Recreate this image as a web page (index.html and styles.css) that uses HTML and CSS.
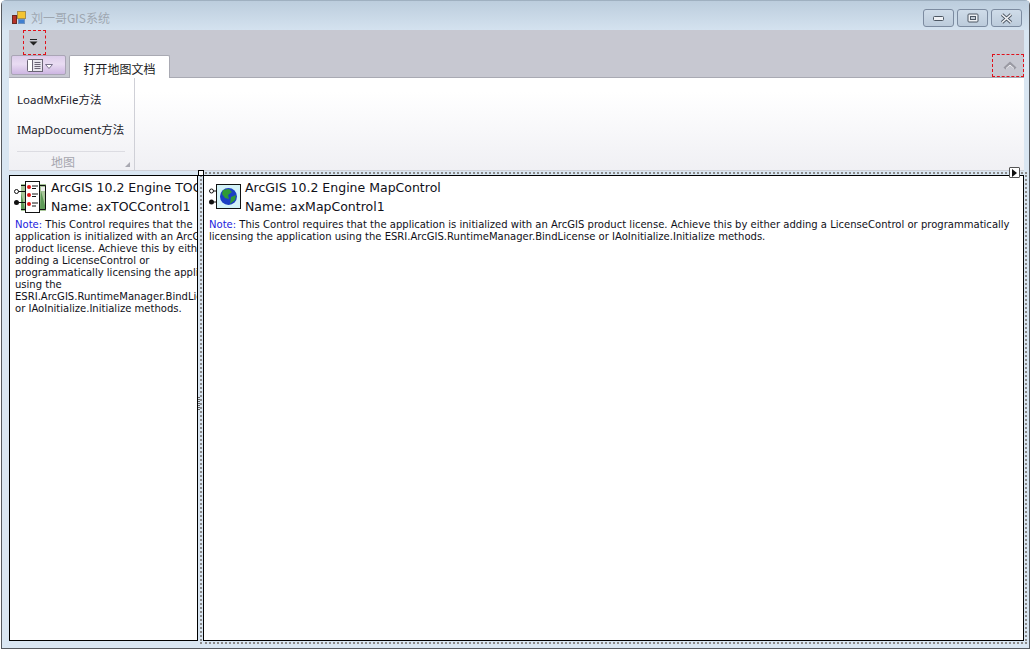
FILE: index.html
```html
<!DOCTYPE html>
<html lang="zh-CN">
<head>
    <meta charset="UTF-8">
    <title>刘一哥GIS系统</title>
    <link rel="stylesheet" href="styles.css">
</head>
<body>
    <div class="window">
        <div class="titlebar">
            <svg class="app-icon" width="14" height="14" viewBox="0 0 14 14">
                <rect x="5.5" y="0.5" width="8" height="7" fill="#f4c430" stroke="#a8904a"/>
                <rect x="0.5" y="4.5" width="4" height="8" fill="#b8332a" stroke="#6b2a22"/>
                <rect x="6.5" y="8.5" width="6" height="4" fill="#3f7fd0" stroke="#6f93c0"/>
            </svg>
            <span class="title">刘一哥GIS系统</span>
            <div class="win-buttons">
                <div class="win-btn">
                    <svg width="12" height="7" viewBox="0 0 12 7"><rect x="0.5" y="1.5" width="10" height="4" rx="1" fill="#eef1f5" stroke="#4d5763"/></svg>
                </div>
                <div class="win-btn">
                    <svg width="12" height="10" viewBox="0 0 12 10"><rect x="1" y="1" width="10" height="8" rx="1" fill="#eef1f5" stroke="#4d5763"/><rect x="3.5" y="3.5" width="5" height="3" fill="#c3ccd6" stroke="#4d5763"/></svg>
                </div>
                <div class="win-btn">
                    <svg width="13" height="11" viewBox="0 0 13 11"><path d="M2 1.5 L11 9.5 M11 1.5 L2 9.5" stroke="#4d5763" stroke-width="3.4"/><path d="M2 1.5 L11 9.5 M11 1.5 L2 9.5" stroke="#f2f4f7" stroke-width="1.6"/></svg>
                </div>
            </div>
        </div>

        <div class="ribbon-head">
            <div class="quick-bar">
                <div class="dashed-box quick-drop">
                    <svg width="9" height="7" viewBox="0 0 9 7"><rect x="1" y="0" width="7" height="1" fill="#222"/><path d="M0.5 2.5 H8.5 L4.5 6.5 Z" fill="#222"/></svg>
                </div>
            </div>
            <div class="tab-row">
                <div class="app-btn">
                    <svg width="26" height="13" viewBox="0 0 26 13">
                        <rect x="0.5" y="0.5" width="15" height="12" rx="1" fill="#fff" stroke="#6a6575"/>
                        <rect x="5.5" y="0.5" width="10" height="12" fill="#e8e6ee" stroke="#6a6575"/>
                        <path d="M7.5 3.5 H13.5 M7.5 5.5 H13.5 M7.5 7.5 H13.5 M7.5 9.5 H13.5" stroke="#6a6575"/>
                        <path d="M18.5 5.5 H25.5 L22 9.5 Z" fill="#fff" stroke="#77708a"/>
                    </svg>
                </div>
                <div class="tab">打开地图文档</div>
                <div class="dashed-box collapse-btn">
                    <svg width="14" height="10" viewBox="0 0 14 10"><path d="M1.5 7.5 L7 2.5 L12.5 7.5" fill="none" stroke="#9a9aa3" stroke-width="3"/><path d="M3 7.5 L7 4 L11 7.5" fill="none" stroke="#f2f2f5" stroke-width="1"/></svg>
                </div>
            </div>
        </div>

        <div class="ribbon">
            <div class="group">
                <div class="group-items">
                    <div class="ribbon-item">LoadMxFile方法</div>
                    <div class="ribbon-item">IMapDocument方法</div>
                </div>
                <div class="group-label">
                    <span>地图</span>
                    <svg class="launcher" width="5" height="5" viewBox="0 0 5 5"><path d="M5 0 V5 H0 Z" fill="#a9a9b2"/></svg>
                </div>
            </div>
        </div>

        <div class="client">
            <div class="panel toc-panel">
                <div class="ctl-head">
                    <svg class="ctl-icon" width="32" height="32" viewBox="0 0 32 32">
                        <rect x="7" y="3" width="25" height="27" fill="#a9c79a"/>
                        <path d="M7 12 L11 28 H7 Z M27 10 L32 28 H26 Z" fill="#5f9a58"/>
                        <path d="M27 6 H32 V10 H27 Z" fill="#eee"/>
                        <path d="M7 4.5 H31.5 V28.5 H7" fill="none" stroke="#111"/>
                        <rect x="11.5" y="0.5" width="14" height="31" fill="#fff" stroke="#111"/>
                        <circle cx="15" cy="6" r="2" fill="#e01616"/>
                        <circle cx="15" cy="14" r="2" fill="#e01616"/>
                        <circle cx="15" cy="23" r="2" fill="#e01616"/>
                        <path d="M18 5 H24 M18 7.5 H22 M18 13 H24 M18 15.5 H22 M18 22 H24 M18 25 H22" stroke="#111"/>
                        <circle cx="2.5" cy="10.5" r="2" fill="#fff" stroke="#111"/>
                        <path d="M4.5 10.5 H11" stroke="#111"/>
                        <circle cx="2.5" cy="21.5" r="2.5" fill="#111"/>
                        <path d="M4.5 21.5 H11" stroke="#111"/>
                    </svg>
                    <div class="ctl-name">
                        <div>ArcGIS 10.2 Engine TOCControl</div>
                        <div>Name: axTOCControl1</div>
                    </div>
                </div>
                <p class="note"><span class="note-tag">Note:</span> This Control requires that the<br>application is initialized with an ArcGIS<br>product license. Achieve this by either<br>adding a LicenseControl or<br>programmatically licensing the application<br>using the<br>ESRI.ArcGIS.RuntimeManager.BindLicense<br>or IAoInitialize.Initialize methods.</p>
            </div>

            <div class="splitter">
                <div class="grip"></div>
            </div>

            <div class="sel-frame">
                <div class="sel-handle"></div>
                <div class="smart-tag">
                    <svg width="5" height="8" viewBox="0 0 5 8"><path d="M0 0 L5 4 L0 8 Z" fill="#111"/></svg>
                </div>
                <div class="panel map-panel">
                    <div class="ctl-head map-head">
                        <svg class="ctl-icon" width="32" height="25" viewBox="0 0 32 25">
                            <rect x="7.5" y="0.5" width="24" height="24" fill="#d3f2f7" stroke="#111"/>
                            <circle cx="19.5" cy="12.5" r="8.5" fill="#1c3fc4"/>
                            <path d="M14 6 L20 5 L23 8 L19 11 L20 15 L16 14 L13 10 Z M22 13 L27 11 L26 16 L21 20 Z" fill="#2f9a35"/>
                            <circle cx="2.5" cy="7" r="2" fill="#fff" stroke="#111"/>
                            <path d="M4.5 7 H8" stroke="#111"/>
                            <circle cx="2.5" cy="18" r="2.5" fill="#111"/>
                            <path d="M4.5 18 H8" stroke="#111"/>
                        </svg>
                        <div class="ctl-name">
                            <div>ArcGIS 10.2 Engine MapControl</div>
                            <div>Name: axMapControl1</div>
                        </div>
                    </div>
                    <p class="note"><span class="note-tag">Note:</span> This Control requires that the application is initialized with an ArcGIS product license. Achieve this by either adding a LicenseControl or programmatically<br>licensing the application using the ESRI.ArcGIS.RuntimeManager.BindLicense or IAoInitialize.Initialize methods.</p>
                </div>
            </div>
        </div>
    </div>
</body>
</html>
```

FILE: styles.css
```css
* {
    margin: 0;
    padding: 0;
    box-sizing: border-box;
}

body {
    background: #fff;
    font-family: "DejaVu Sans", sans-serif;
}

.window {
    width: 1029px;
    height: 649px;
    margin-left: 1px;
    padding: 0 5px 4px 7px;
    display: flex;
    flex-direction: column;
    background: #d9e6f2;
    border: 1px solid #55595f;
    border-top-color: #9fb0c0;
    border-radius: 5px 5px 0 0;
}

/* title bar */
.titlebar {
    height: 29px;
    flex: none;
    margin: 0 -5px 0 -7px;
    padding: 0 7px 0 10px;
    display: flex;
    align-items: center;
    background: linear-gradient(#bccddd, #d4e2ef);
}

.app-icon {
    margin-right: 5px;
    margin-top: 4px;
}

.title {
    font-family: "Noto Sans CJK SC", sans-serif;
    font-size: 12px;
    color: #9ea7b1;
    margin-top: 4px;
}

.win-buttons {
    margin-left: auto;
    margin-top: 5px;
    display: flex;
    gap: 3px;
}

.win-btn {
    width: 31px;
    height: 18px;
    display: flex;
    align-items: center;
    justify-content: center;
    background: linear-gradient(#cfdce9, #bccbdb);
    border: 1px solid #7c8ba0;
    border-radius: 3px;
}

/* ribbon */
.ribbon-head {
    height: 48px;
    flex: none;
    background: #c7c8d1;
    border-bottom: 1px solid #a9aab3;
}

.quick-bar {
    height: 25px;
    padding-left: 14px;
}

.dashed-box {
    display: flex;
    align-items: center;
    justify-content: center;
    border: 1px dashed #e0101a;
}

.quick-drop {
    width: 23px;
    height: 25px;
    padding-right: 2px;
}

.tab-row {
    height: 22px;
    display: flex;
    align-items: flex-end;
    padding-left: 2px;
}

.app-btn {
    width: 55px;
    height: 20px;
    margin-bottom: 2px;
    padding-left: 3px;
    display: flex;
    align-items: center;
    justify-content: center;
    background: linear-gradient(#dccdea, #e9dcf2 45%, #cdb6e2);
    border: 1px solid #a9a5b5;
    border-radius: 2px;
}

.tab {
    width: 101px;
    height: 23px;
    margin-left: 3px;
    margin-bottom: -1px;
    text-align: center;
    font-family: "Noto Sans CJK SC", sans-serif;
    font-size: 12px;
    line-height: 25px;
    color: #1c1c24;
    background: #fff;
    border: 1px solid #a9aab3;
    border-bottom: none;
    border-radius: 2px 2px 0 0;
}

.collapse-btn {
    width: 32px;
    height: 23px;
    margin-left: auto;
    padding-left: 3px;
}

.ribbon {
    height: 93px;
    flex: none;
    display: flex;
    background: linear-gradient(#fff 15%, #f0f0f4);
    border-bottom: 1px solid #d0d1d8;
}

.group {
    width: 126px;
    padding: 0 9px 0 8px;
    display: flex;
    flex-direction: column;
    border-right: 1px solid #cfd0d7;
}

.group-items {
    flex: 1;
    padding-top: 7px;
}

.ribbon-item {
    height: 30px;
    font-family: "Noto Sans", "Noto Sans CJK SC", sans-serif;
    font-size: 11.5px;
    line-height: 30px;
    color: #22222c;
    white-space: nowrap;
}

.group-label {
    height: 19px;
    padding-right: 16px;
    position: relative;
    text-align: center;
    font-family: "Noto Sans CJK SC", sans-serif;
    font-size: 12px;
    line-height: 20px;
    color: #a5a5ae;
    border-top: 1px solid #dcdce2;
}

.launcher {
    position: absolute;
    right: -5px;
    bottom: 3px;
}

/* designer surface */
.client {
    flex: 1;
    min-height: 0;
    display: flex;
    padding-top: 1px;
}

.panel {
    background: #fff;
    border: 1px solid #000;
    overflow: hidden;
}

.toc-panel {
    width: 189px;
    height: 466px;
    flex: none;
    margin-top: 3px;
}

.splitter {
    width: 2px;
    flex: none;
    position: relative;
}

.grip {
    position: absolute;
    left: 0;
    top: 225px;
    width: 2px;
    height: 14px;
    background: repeating-linear-gradient(#666 0 1px, transparent 1px 2px);
}

.sel-frame {
    width: 827px;
    height: 472px;
    flex: none;
    position: relative;
    padding: 1px;
    border: 2px dotted #8a8a8a;
}

.sel-handle {
    position: absolute;
    left: -4px;
    top: -4px;
    width: 6px;
    height: 6px;
    background: #fff;
    border: 1px solid #000;
}

.smart-tag {
    position: absolute;
    right: 5px;
    top: -7px;
    width: 11px;
    height: 11px;
    display: flex;
    align-items: center;
    justify-content: center;
    background: #fff;
    border: 1px solid #555;
    border-radius: 1px;
}

.map-panel {
    width: 821px;
    height: 466px;
}

.ctl-head {
    display: flex;
    align-items: flex-start;
    padding: 5px 0 0 4px;
}

.ctl-icon {
    flex: none;
    margin-right: 5px;
}

.map-head {
    padding: 8px 0 0 5px;
}

.map-head .ctl-icon {
    margin-right: 4px;
}

.ctl-name {
    margin-top: -3px;
    font-size: 12.5px;
    line-height: 19px;
    color: #101018;
    white-space: nowrap;
}

.map-head .ctl-name {
    margin-top: -6px;
}

.note {
    margin: 3px 0 0 5px;
    font-size: 10.04px;
    line-height: 12px;
    color: #101018;
    white-space: nowrap;
}

.note-tag {
    color: #2222dd;
}
```
